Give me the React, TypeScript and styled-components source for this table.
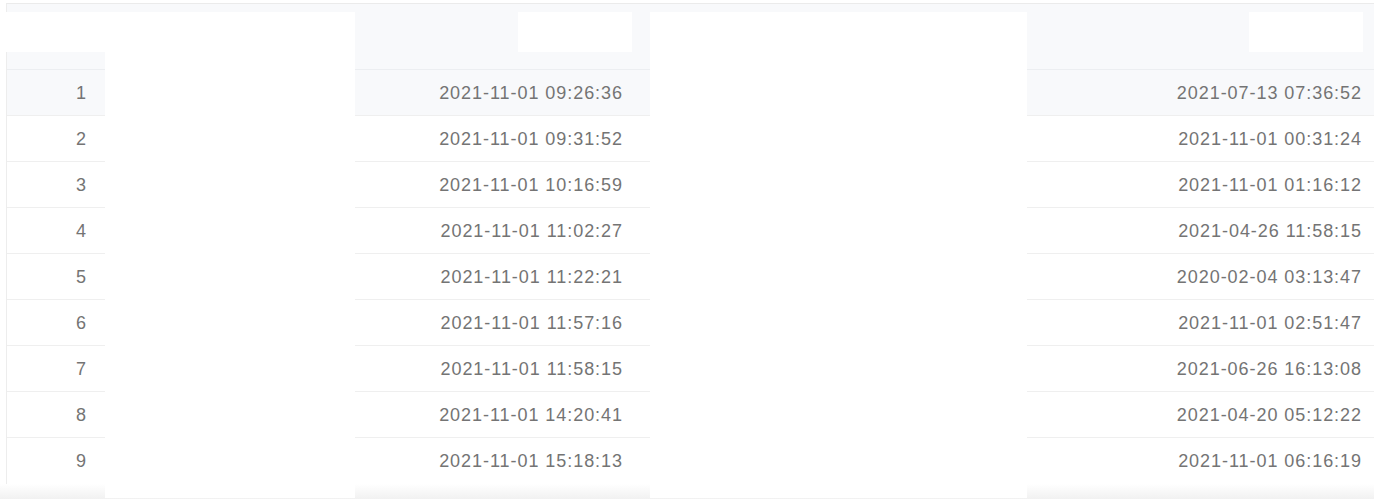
import React from "react";
import styled, { createGlobalStyle } from "styled-components";

const Global = createGlobalStyle`
  html, body { margin: 0; padding: 0; background: #ffffff; }
  body { font-family: "Liberation Sans", Arial, sans-serif; }
`;

const rows: [string, string][] = [
  ["2021-11-01 09:26:36", "2021-07-13 07:36:52"],
  ["2021-11-01 09:31:52", "2021-11-01 00:31:24"],
  ["2021-11-01 10:16:59", "2021-11-01 01:16:12"],
  ["2021-11-01 11:02:27", "2021-04-26 11:58:15"],
  ["2021-11-01 11:22:21", "2020-02-04 03:13:47"],
  ["2021-11-01 11:57:16", "2021-11-01 02:51:47"],
  ["2021-11-01 11:58:15", "2021-06-26 16:13:08"],
  ["2021-11-01 14:20:41", "2021-04-20 05:12:22"],
  ["2021-11-01 15:18:13", "2021-11-01 06:16:19"],
];

const Page = styled.div`
  position: relative;
  width: 1374px;
  height: 500px;
  overflow: hidden;
  padding: 3px 0 0 6px;
  box-sizing: border-box;
`;

const Table = styled.div`
  width: 1368px;
  border-top: 1px solid #ebebeb;
  border-left: 1px solid #ededed;
  box-sizing: border-box;
`;

const Grid = "98px 250px 295px 377px 1fr";

const HeaderRow = styled.div`
  display: grid;
  grid-template-columns: ${Grid};
  height: 66px;
  background: #f8f9fb;
  border-bottom: 1px solid #eceef1;
  box-sizing: border-box;
`;

const HeaderCell = styled.div<{ $pr?: number }>`
  display: flex;
  justify-content: flex-end;
  align-items: flex-start;
  padding: 8px ${(p) => p.$pr ?? 0}px 0 0;
`;

const HeaderMask = styled.div`
  width: 114px;
  height: 40px;
  background: #ffffff;
`;

const Row = styled.div<{ $active?: boolean }>`
  display: grid;
  grid-template-columns: ${Grid};
  height: 46px;
  background: ${(p) => (p.$active ? "#f8f9fb" : "#ffffff")};
  border-bottom: 1px solid #efefef;
  box-sizing: border-box;
`;

const LastRow = styled(Row)`
  border-bottom: none;
`;

const Cell = styled.div<{ $pr?: number }>`
  display: flex;
  align-items: center;
  justify-content: flex-end;
  padding: 1px ${(p) => p.$pr ?? 0}px 0 0;
  font-size: 18px;
  letter-spacing: 0.95px;
  color: #747474;
  white-space: nowrap;
`;

const ScrollTrack = styled.div`
  height: 15px;
  margin-left: -6px;
  background: linear-gradient(#ffffff, #f1f1f1);
`;

const Mask = styled.div<{ $x: number; $y: number; $w: number; $h: number }>`
  position: absolute;
  left: ${(p) => p.$x}px;
  top: ${(p) => p.$y}px;
  width: ${(p) => p.$w}px;
  height: ${(p) => p.$h}px;
  background: #ffffff;
`;

export default function App() {
  return (
    <>
      <Global />
      <Page>
        <Table>
          <HeaderRow>
            <HeaderCell />
            <HeaderCell />
            <HeaderCell $pr={18}>
              <HeaderMask />
            </HeaderCell>
            <HeaderCell />
            <HeaderCell $pr={11}>
              <HeaderMask />
            </HeaderCell>
          </HeaderRow>
          {rows.map(([a, b], i) => {
            const R = i === rows.length - 1 ? LastRow : Row;
            return (
              <R key={i} $active={i === 0}>
                <Cell $pr={18}>{i + 1}</Cell>
                <Cell />
                <Cell $pr={27}>{a}</Cell>
                <Cell />
                <Cell $pr={12}>{b}</Cell>
              </R>
            );
          })}
        </Table>
        <ScrollTrack />
        <Mask $x={6} $y={12} $w={349} $h={40} />
        <Mask $x={105} $y={12} $w={250} $h={486} />
        <Mask $x={650} $y={12} $w={377} $h={486} />
      </Page>
    </>
  );
}
